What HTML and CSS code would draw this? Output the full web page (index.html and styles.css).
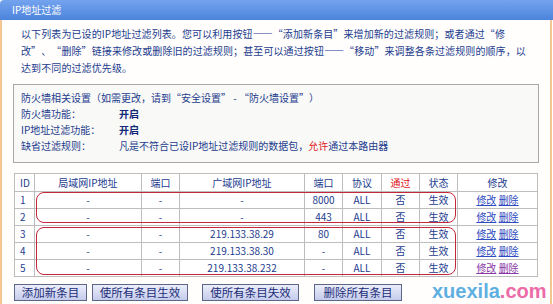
FILE: index.html
```html
<!DOCTYPE html>
<html lang="zh-CN">
<head>
    <meta charset="UTF-8">
    <title>IP地址过滤</title>
    <link rel="stylesheet" href="styles.css">
</head>
<body>
<div class="title">IP地址过滤</div>
<div class="main">
    <p class="intro">以下列表为已设的IP地址过滤列表。您可以利用按钮——“添加新条目”来增加新的过滤规则；或者通过“修<br>改”、“删除”链接来修改或删除旧的过滤规则；甚至可以通过按钮——“移动”来调整各条过滤规则的顺序，以<br>达到不同的过滤优先级。</p>

    <div class="setbox">
        <div class="setrow">防火墙相关设置（如需更改，请到“安全设置” - “防火墙设置”）</div>
        <div class="setrow"><span class="lbl">防火墙功能：</span><b>开启</b></div>
        <div class="setrow"><span class="lbl">IP地址过滤功能：</span><b>开启</b></div>
        <div class="setrow"><span class="lbl">缺省过滤规则：</span>凡是不符合已设IP地址过滤规则的数据包，<span class="red">允许</span>通过本路由器</div>
    </div>

    <div class="tablewrap">
        <table class="list">
            <colgroup>
                <col style="width:20px"><col style="width:107px"><col style="width:38px"><col style="width:125px"><col style="width:38px"><col style="width:39px"><col style="width:38px"><col style="width:38px"><col style="width:80px">
            </colgroup>
            <tr class="head">
                <td class="id">ID</td><td>局域网IP地址</td><td>端口</td><td>广域网IP地址</td><td>端口</td><td>协议</td><td class="red">通过</td><td>状态</td><td>修改</td>
            </tr>
            <tr>
                <td class="id">1</td><td>-</td><td>-</td><td>-</td><td>8000</td><td>ALL</td><td>否</td><td>生效</td><td><a href="#">修改</a> <a href="#">删除</a></td>
            </tr>
            <tr>
                <td class="id">2</td><td>-</td><td>-</td><td>-</td><td>443</td><td>ALL</td><td>否</td><td>生效</td><td><a href="#">修改</a> <a href="#">删除</a></td>
            </tr>
            <tr>
                <td class="id">3</td><td>-</td><td>-</td><td>219.133.38.29</td><td>80</td><td>ALL</td><td>否</td><td>生效</td><td><a href="#">修改</a> <a href="#">删除</a></td>
            </tr>
            <tr>
                <td class="id">4</td><td>-</td><td>-</td><td>219.133.38.30</td><td>-</td><td>ALL</td><td>否</td><td>生效</td><td><a href="#">修改</a> <a href="#">删除</a></td>
            </tr>
            <tr>
                <td class="id">5</td><td>-</td><td>-</td><td>219.133.38.232</td><td>-</td><td>ALL</td><td>否</td><td>生效</td><td><a class="visited" href="#">修改</a> <a class="visited" href="#">删除</a></td>
            </tr>
        </table>
        <i class="mark mark1"></i>
        <i class="mark mark2"></i>
    </div>

    <div class="btns">
        <span class="btn b1">添加新条目</span>
        <span class="btn b2">使所有条目生效</span>
        <span class="btn b3">使所有条目失效</span>
        <span class="btn b4">删除所有条目</span>
    </div>
</div>
<div class="wm">xuexila<span>.com</span></div>
</body>
</html>
```

FILE: styles.css
```css
* {
    margin: 0;
    padding: 0;
}

body {
    position: relative;
    width: 553px;
    height: 304px;
    overflow: hidden;
    background: #fff;
    font-family: "Noto Sans CJK SC", sans-serif;
    font-size: 10px;
    color: #1d3c8e;
    text-spacing-trim: space-all;
}

.title {
    height: 20px;
    line-height: 20px;
    padding-left: 12px;
    color: #fff;
    font-size: 10px;
    background: linear-gradient(#74a3ee, #4c84dc);
    border-radius: 4px 0 0 0;
}

.main {
    width: 526px;
    height: 284px;
    padding: 5px 11px 0 11px;
    border-left: 2px solid #f6c691;
    border-right: 2px solid #f6c691;
    background: #fffefc;
}

.intro {
    padding-left: 8px;
    line-height: 17px;
    letter-spacing: 0.1px;
    white-space: nowrap;
}

.setbox {
    margin-top: 8px;
    height: 72px;
    padding: 5px 0 0 7px;
    border: 1px solid #a9a9a9;
    background: #f9f9f7;
}

.setrow {
    line-height: 16px;
    display: flex;
}

.setrow .lbl {
    width: 98px;
}

.setrow b {
    color: #112a78;
}

.red {
    color: #e0181c;
}

.tablewrap {
    position: relative;
    margin-top: 10px;
    margin-left: 1px;
    width: 523px;
}

.list {
    width: 523px;
    table-layout: fixed;
    border-collapse: collapse;
    border: 1px solid #9c9c9c;
    background: #fff;
}

.list td {
    border: 1px solid #bdbdbd;
    height: 16px;
    line-height: 16px;
    text-align: center;
    white-space: nowrap;
}

.list .head td {
    height: 17px;
}

.list td.id {
    text-align: left;
    padding-left: 5px;
}

.list a {
    color: #2f4bc0;
}

.list a.visited {
    color: #8a3aa6;
}

.mark {
    position: absolute;
    left: 22px;
    width: 418px;
    border: 1px solid #c4263a;
    border-radius: 8px;
}

.mark1 {
    top: 19px;
    height: 29px;
}

.mark2 {
    top: 54px;
    height: 46px;
}

.btns {
    display: flex;
    margin-top: 7px;
    margin-left: 1px;
}

.btn {
    height: 15px;
    line-height: 15px;
    font-size: 11.5px;
    text-align: center;
    color: #1c2d78;
    border: 1px solid #5c6688;
    background: linear-gradient(#eceefb, #c4cbeb);
}

.b1 { width: 71px; }
.b2 { width: 94px; margin-left: 5px; }
.b3 { width: 95px; margin-left: 14px; }
.b4 { width: 86px; margin-left: 15px; }

.wm {
    position: absolute;
    left: 432px;
    top: 280px;
    font-family: "Liberation Sans", Arial, sans-serif;
    font-size: 20px;
    font-weight: bold;
    color: #5eb0e2;
}

.wm span {
    color: #ec6ba8;
}
```
